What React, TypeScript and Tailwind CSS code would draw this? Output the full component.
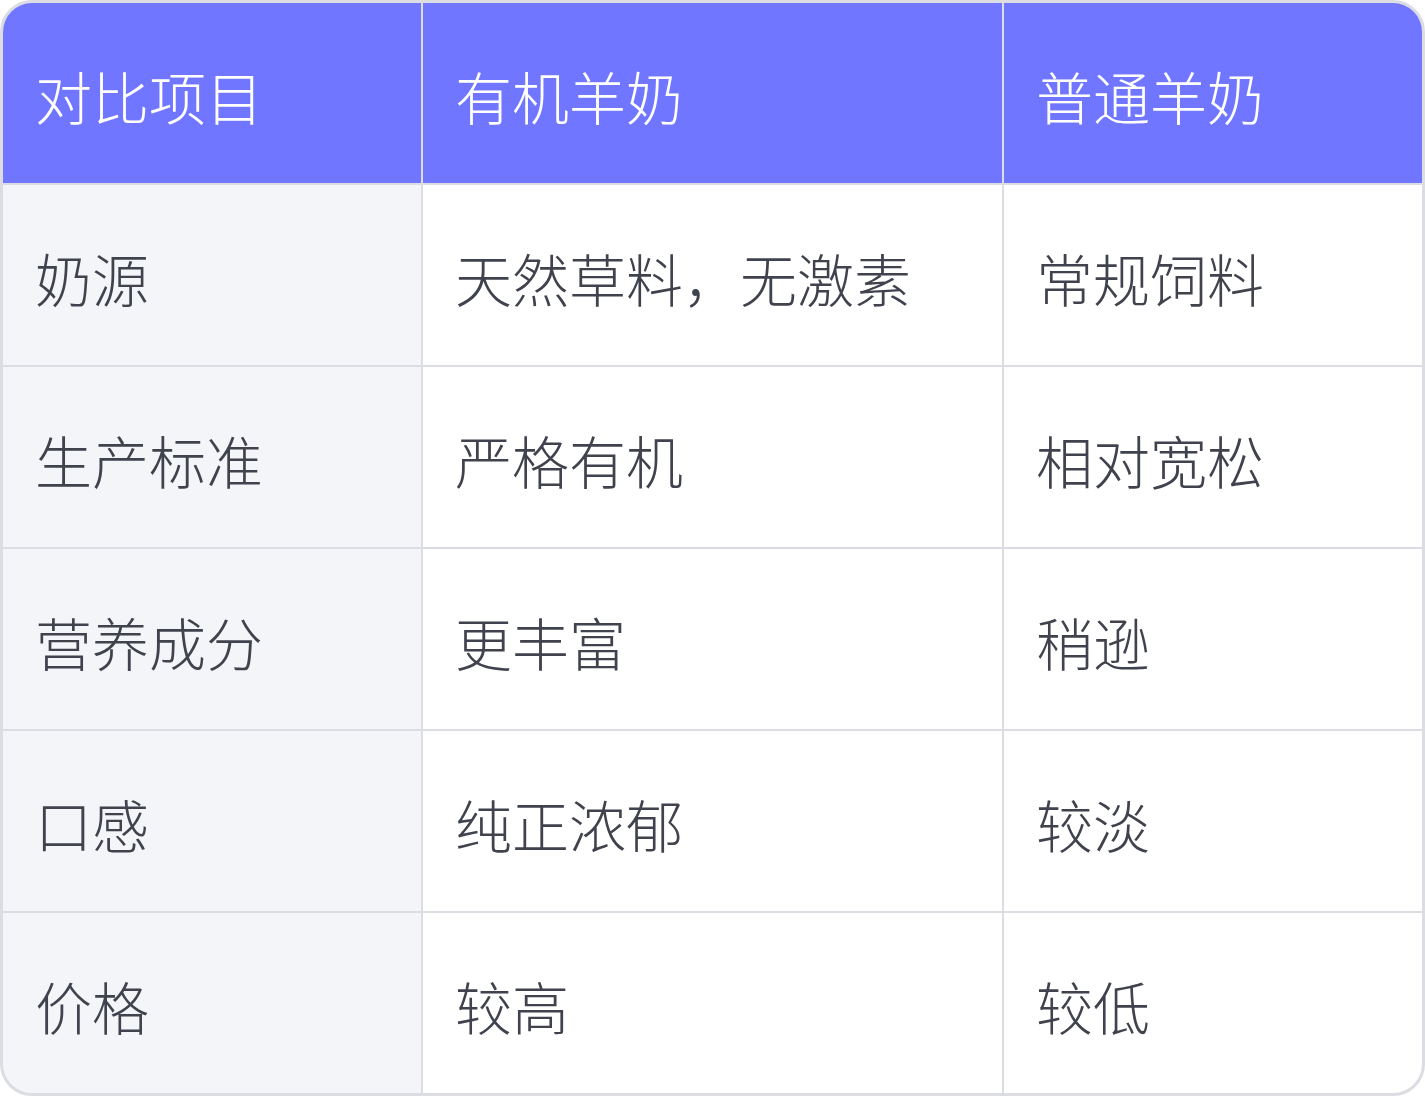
import React from "react";

const rows: [string, string, string][] = [
  ["奶源", "天然草料，无激素", "常规饲料"],
  ["生产标准", "严格有机", "相对宽松"],
  ["营养成分", "更丰富", "稍逊"],
  ["口感", "纯正浓郁", "较淡"],
  ["价格", "较高", "较低"],
];

const font = {
  fontFamily: '"Noto Sans CJK SC", "Noto Sans", sans-serif',
};

export default function App() {
  return (
    <div className="w-[1425px] h-[1096px] bg-white" style={font}>
      <div className="w-full h-full rounded-[32px] border-[3px] border-[#dcdde3] overflow-hidden bg-[#dcdde3] grid grid-cols-[418px_579px_418px] grid-rows-[180px_180px_180px_180px_180px_180px] gap-[2px]">
        {["对比项目", "有机羊奶", "普通羊奶"].map((h) => (
          <div
            key={h}
            className="bg-[#7076ff] text-white text-[57px] font-light flex items-center pl-[32px] pt-[5px]"
          >
            {h}
          </div>
        ))}
        {rows.map((r) =>
          r.map((c, i) => (
            <div
              key={r[0] + i}
              className={`${
                i === 0 ? "bg-[#f4f5f9]" : "bg-white"
              } text-[#40434e] text-[57px] font-light flex items-center pl-[32px] pt-[5px]`}
            >
              {c}
            </div>
          ))
        )}
      </div>
    </div>
  );
}
